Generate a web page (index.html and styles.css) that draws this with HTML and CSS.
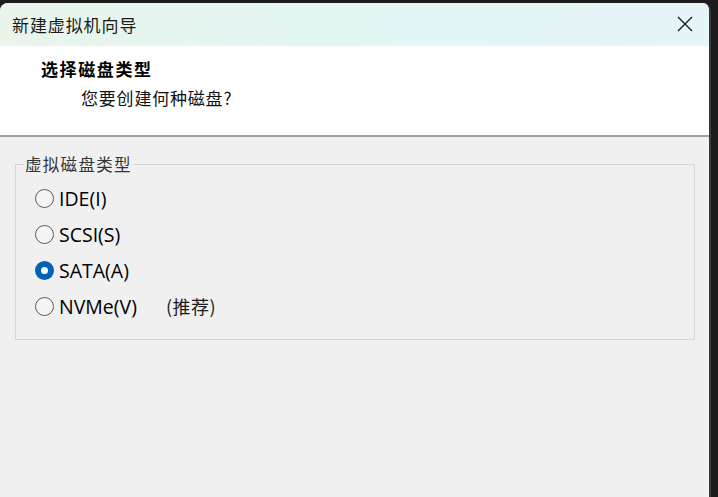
FILE: index.html
```html
<!DOCTYPE html>
<html lang="zh-CN">
<head>
<meta charset="utf-8">
<title>新建虚拟机向导</title>
<link rel="stylesheet" href="styles.css">
</head>
<body>
<div class="window">
  <div class="titlebar">
    <span class="title">新建虚拟机向导</span>
    <span class="close">
      <svg width="16" height="16" viewBox="0 0 16 16"><path d="M1 1 L15 15 M15 1 L1 15" stroke="#1a1a1a" stroke-width="1.4" fill="none"/></svg>
    </span>
  </div>
  <div class="header">
    <div class="h-title">选择磁盘类型</div>
    <div class="h-sub">您要创建何种磁盘?</div>
  </div>
  <div class="content">
    <fieldset class="group">
      <legend>虚拟磁盘类型</legend>
      <div class="opts">
        <div class="opt"><span class="radio"></span><span class="lbl">IDE(I)</span></div>
        <div class="opt"><span class="radio"></span><span class="lbl">SCSI(S)</span></div>
        <div class="opt"><span class="radio checked"></span><span class="lbl">SATA(A)</span></div>
        <div class="opt"><span class="radio"></span><span class="lbl nv">NVMe(V)</span><span class="rec">(推荐)</span></div>
      </div>
    </fieldset>
  </div>
</div>
</body>
</html>
```

FILE: styles.css
```css
html, body {
  margin: 0;
  padding: 0;
  background: #1c1c1c;
  height: 497px;
  overflow: hidden;
}
.window {
  margin-top: 3px;
  width: 709px;
  height: 494px;
  border-right: 2px solid #3a3a3a;
  border-radius: 8px 8px 0 0;
  background: #f0f0f0;
  overflow: hidden;
  font-family: "Noto Sans CJK SC", sans-serif;
  color: #000;
}
.titlebar {
  height: 43px;
  display: flex;
  align-items: center;
  justify-content: space-between;
  background: linear-gradient(90deg, #eaf5eb 0%, #e3f6f4 45%, #e6f5f8 100%);
  padding: 0 16px 0 12px;
}
.title {
  font-size: 17px;
  letter-spacing: 0.9px;
  color: #1a1a1a;
  margin-top: -1px;
}
.close {
  display: flex;
  margin-top: -2px;
}
.header {
  background: #fff;
  height: 91px;
  border-bottom: 2px solid #a0a0a0;
  padding-left: 41px;
  box-sizing: border-box;
  padding-top: 10px;
}
.h-title {
  font-weight: bold;
  font-size: 17px;
  letter-spacing: 1.6px;
  line-height: 26px;
}
.h-sub {
  font-size: 17px;
  letter-spacing: 0.8px;
  line-height: 26px;
  margin-top: 3px;
  padding-left: 40px;
  color: #111;
}
.content {
  padding: 18px 15px 0 15px;
}
.group {
  margin: 0;
  width: 680px;
  height: 185px;
  box-sizing: border-box;
  border: 1px solid #d6d6d6;
  padding: 7px 0 0 0;
}
.group legend {
  font-size: 16.5px;
  letter-spacing: 1.3px;
  color: #333;
  padding: 0 1px;
  margin-left: 8px;
  line-height: 18px;
}
.opts {
  padding-left: 19px;
}
.opt {
  display: flex;
  align-items: center;
  height: 36px;
}
.radio {
  width: 17px;
  height: 17px;
  border: 1.3px solid #5c5c5c;
  border-radius: 50%;
  box-sizing: content-box;
  background: #f4f4f4;
  flex: none;
}
.radio.checked {
  width: 7px;
  height: 7px;
  border: 6.3px solid #0063b8;
  background: #fff;
}
.lbl {
  font-family: "Open Sans", "Noto Sans CJK SC", sans-serif;
  font-size: 19.5px;
  margin-left: 5px;
  color: #000;
}
.lbl.nv {
  width: 107px;
}
.rec {
  font-size: 18px;
  letter-spacing: 0.5px;
  color: #1a1a1a;
}
```
